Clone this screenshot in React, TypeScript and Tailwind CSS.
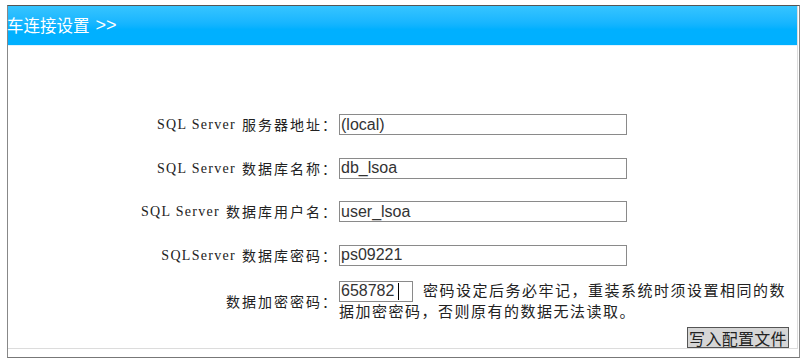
const cjk = '"Noto Sans CJK SC", sans-serif';

const rows = [
  { en: "SQL Server", cn: "服务器地址：", value: "(local)" },
  { en: "SQL Server", cn: "数据库名称：", value: "db_lsoa" },
  { en: "SQL Server", cn: "数据库用户名：", value: "user_lsoa" },
  { en: "SQLServer", cn: "数据库密码：", value: "ps09221" },
];

function Field({ value, className = "" }: { value: string; className?: string }) {
  return (
    <div
      className={`flex h-[21px] items-center border border-[#8a8a8a] bg-white pl-[1px] text-[16px] leading-none text-[#333] ${className}`}
      style={{ fontFamily: '"Liberation Sans", Arial, sans-serif' }}
    >
      {value}
    </div>
  );
}

function Label({ en, cn }: { en?: string; cn: string }) {
  return (
    <div className="flex items-center justify-end whitespace-nowrap pr-[1px] text-[#222]">
      {en && (
        <span
          className="mr-[6px] text-[14px] tracking-[1.3px]"
          style={{ fontFamily: '"Liberation Serif", serif' }}
        >
          {en}
        </span>
      )}
      <span className="text-[14px] tracking-[2px]" style={{ fontFamily: cjk }}>
        {cn}
      </span>
    </div>
  );
}

export default function App() {
  return (
    <div className="h-[363px] w-[803px] bg-white pt-[5px]">
      <div className="ml-[7px] h-[353px] w-[793px] border border-t-[#555] border-r-[#8a8a8a] border-b-[#777] border-l-[#888]">
        <div className="mr-[1px] mb-[7px] flex h-[343px] flex-col border-r border-b border-[#dcdcdc]">
          <div
            className="flex h-[40px] shrink-0 items-center border-b border-[#dff3ff] bg-gradient-to-b from-[#35c4ff] to-[#00b0ff] to-60% text-[16.5px] text-white"
            style={{ fontFamily: cjk }}
          >
            <span className="-ml-[1px]">车连接设置</span>
            <span className="ml-[6px] text-[18px]" style={{ fontFamily: '"Liberation Sans", sans-serif' }}>
              &gt;&gt;
            </span>
          </div>

          <div className="mt-[68px] grid grid-cols-[331px_1fr] gap-y-[22.5px] pr-[6px]">
            {rows.map((r) => (
              <div key={r.cn} className="contents">
                <Label en={r.en} cn={r.cn} />
                <Field value={r.value} className="w-[288px]" />
              </div>
            ))}
          </div>

          <div className="mt-[15px] grid grid-cols-[331px_1fr] pr-[6px]">
            <div className="mt-[10px] self-start">
              <Label cn="数据加密密码：" />
            </div>
            <div
              className="text-[15px] leading-[18px] tracking-[1.5px] text-[#222]"
              style={{ fontFamily: cjk }}
            >
              <span
                className="relative inline-flex h-[21px] w-[74px] items-center border border-[#8a8a8a] pl-[1px] align-middle text-[16px] tracking-normal text-[#333]"
                style={{ fontFamily: '"Liberation Sans", Arial, sans-serif' }}
              >
                658782
                <span className="absolute top-[1px] left-[58px] h-[17px] w-[1px] bg-black" />
              </span>
              <span className="ml-[10px]">
                密码设定后务必牢记，重装系统时须设置相同的数据加密密码，否则原有的数据无法读取。
              </span>
            </div>
          </div>

          <div className="mt-auto flex justify-end pr-[8px]">
            <button
              type="button"
              className="h-[21px] w-[102px] border border-[#555] bg-[#d6d6d6] text-[16px] leading-none tracking-[0.3px] text-[#222]"
              style={{ fontFamily: cjk }}
            >
              写入配置文件
            </button>
          </div>
        </div>
      </div>
    </div>
  );
}
